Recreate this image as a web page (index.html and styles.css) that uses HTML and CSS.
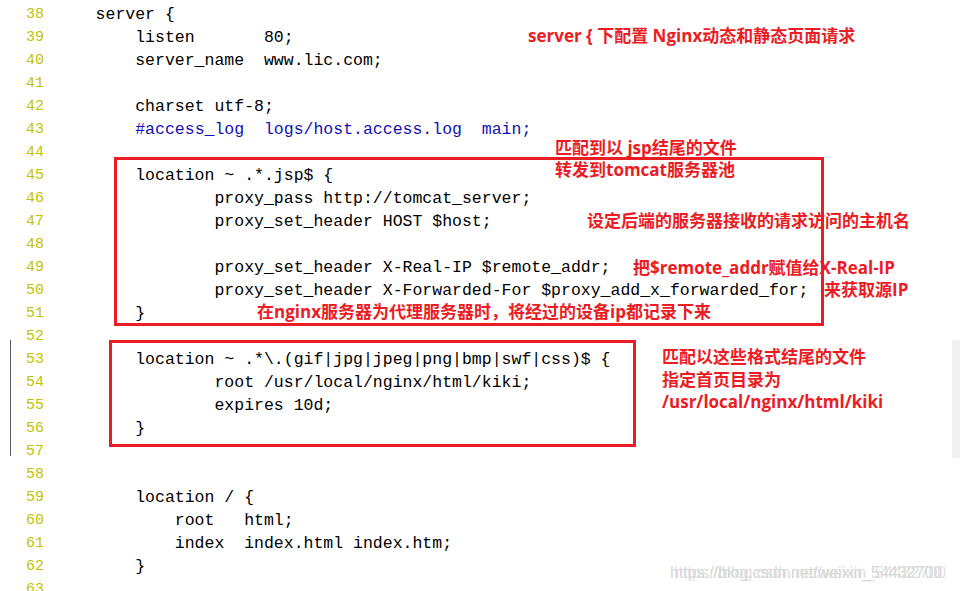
FILE: index.html
```html
<!DOCTYPE html>
<html lang="zh-CN">
<head>
<meta charset="utf-8">
<title>nginx.conf</title>
<link rel="stylesheet" href="styles.css">
</head>
<body>
<div class="editor">
  <div class="lines">
    <div class="row"><span class="ln">38</span><span class="code">    server {</span></div>
    <div class="row"><span class="ln">39</span><span class="code">        listen       80;</span></div>
    <div class="row"><span class="ln">40</span><span class="code">        server_name  www.lic.com;</span></div>
    <div class="row"><span class="ln">41</span><span class="code"></span></div>
    <div class="row"><span class="ln">42</span><span class="code">        charset utf-8;</span></div>
    <div class="row"><span class="ln">43</span><span class="code">        <span class="comment">#access_log  logs/host.access.log  main;</span></span></div>
    <div class="row"><span class="ln">44</span><span class="code"></span></div>
    <div class="row"><span class="ln">45</span><span class="code">        location ~ .*.jsp$ {</span></div>
    <div class="row"><span class="ln">46</span><span class="code">                proxy_pass http://tomcat_server;</span></div>
    <div class="row"><span class="ln">47</span><span class="code">                proxy_set_header HOST $host;</span></div>
    <div class="row"><span class="ln">48</span><span class="code"></span></div>
    <div class="row"><span class="ln">49</span><span class="code">                proxy_set_header X-Real-IP $remote_addr;</span></div>
    <div class="row"><span class="ln">50</span><span class="code">                proxy_set_header X-Forwarded-For $proxy_add_x_forwarded_for;</span></div>
    <div class="row"><span class="ln">51</span><span class="code">        }</span></div>
    <div class="row"><span class="ln">52</span><span class="code"></span></div>
    <div class="row"><span class="ln">53</span><span class="code">        location ~ .*\.(gif|jpg|jpeg|png|bmp|swf|css)$ {</span></div>
    <div class="row"><span class="ln">54</span><span class="code">                root /usr/local/nginx/html/kiki;</span></div>
    <div class="row"><span class="ln">55</span><span class="code">                expires 10d;</span></div>
    <div class="row"><span class="ln">56</span><span class="code">        }</span></div>
    <div class="row"><span class="ln">57</span><span class="code"></span></div>
    <div class="row"><span class="ln">58</span><span class="code"></span></div>
    <div class="row"><span class="ln">59</span><span class="code">        location / {</span></div>
    <div class="row"><span class="ln">60</span><span class="code">            root   html;</span></div>
    <div class="row"><span class="ln">61</span><span class="code">            index  index.html index.htm;</span></div>
    <div class="row"><span class="ln">62</span><span class="code">        }</span></div>
    <div class="row"><span class="ln">63</span><span class="code"></span></div>
  </div>

  <div class="gutter-mark"></div>
  <div class="scroll-strip"></div>

  <div class="box box-jsp"></div>
  <div class="box box-static"></div>

  <div class="note note-server">server { 下配置 Nginx动态和静态页面请求</div>
  <div class="note note-jsp">匹配到以 jsp结尾的文件<br>转发到tomcat服务器池</div>
  <div class="note note-host">设定后端的服务器接收的请求访问的主机名</div>
  <div class="note note-real">把$remote_addr赋值给X-Real-IP</div>
  <div class="note note-src">来获取源IP</div>
  <div class="note note-proxy">在nginx服务器为代理服务器时，将经过的设备ip都记录下来</div>
  <div class="note note-static">匹配以这些格式结尾的文件<br>指定首页目录为<br>/usr/local/nginx/html/kiki</div>

  <div class="watermark">https://blog.csdn.net/weixin_54432700</div>
</div>
</body>
</html>
```

FILE: styles.css
```css
html, body {
  margin: 0;
  padding: 0;
  background: #ffffff;
  overflow: hidden;
}

.editor {
  position: relative;
  width: 960px;
  height: 591px;
  overflow: hidden;
  background: #ffffff;
}

.lines {
  display: flex;
  flex-direction: column;
  padding-top: 3px;
}

.row {
  display: flex;
  height: 23px;
  line-height: 23px;
  align-items: center;
}

.ln {
  width: 44px;
  text-align: right;
  font-family: "Liberation Mono", "DejaVu Sans Mono", monospace;
  font-size: 15px;
  color: #c2c200;
  flex: none;
}

.code {
  margin-left: 12px;
  white-space: pre;
  font-family: "Liberation Mono", "DejaVu Sans Mono", monospace;
  font-size: 16.5px;
  color: #000000;
}

.comment {
  color: #1010b8;
}

.gutter-mark {
  position: absolute;
  left: 10px;
  top: 340px;
  width: 1px;
  height: 116px;
  background: #555555;
}

.scroll-strip {
  position: absolute;
  left: 952px;
  top: 340px;
  width: 8px;
  height: 118px;
  background: #f0f0f0;
}

.box {
  position: absolute;
  box-sizing: border-box;
  border: 3px solid #ec1c24;
}

.box-jsp {
  left: 114px;
  top: 157px;
  width: 710px;
  height: 169px;
}

.box-static {
  left: 109px;
  top: 340px;
  width: 527px;
  height: 107px;
}

.note {
  position: absolute;
  font-family: "Open Sans", "Noto Sans CJK SC", sans-serif;
  font-weight: 700;
  font-size: 17px;
  line-height: 22px;
  color: #ec1c24;
  white-space: nowrap;
}

.note-server { left: 528px; top: 25px; }
.note-jsp { left: 555px; top: 137px; }
.note-host { left: 587px; top: 210px; }
.note-real { left: 633px; top: 257px; }
.note-src { left: 824px; top: 279px; }
.note-proxy { left: 257px; top: 301px; }
.note-static { left: 662px; top: 346px; line-height: 22.5px; }

.watermark {
  position: absolute;
  left: 670px;
  top: 563px;
  font-family: "Liberation Sans", Arial, sans-serif;
  font-size: 16px;
  line-height: 20px;
  color: #d8d8d8;
  white-space: nowrap;
  text-shadow: 4px 0 0 rgba(216, 216, 216, 0.8);
}
```
